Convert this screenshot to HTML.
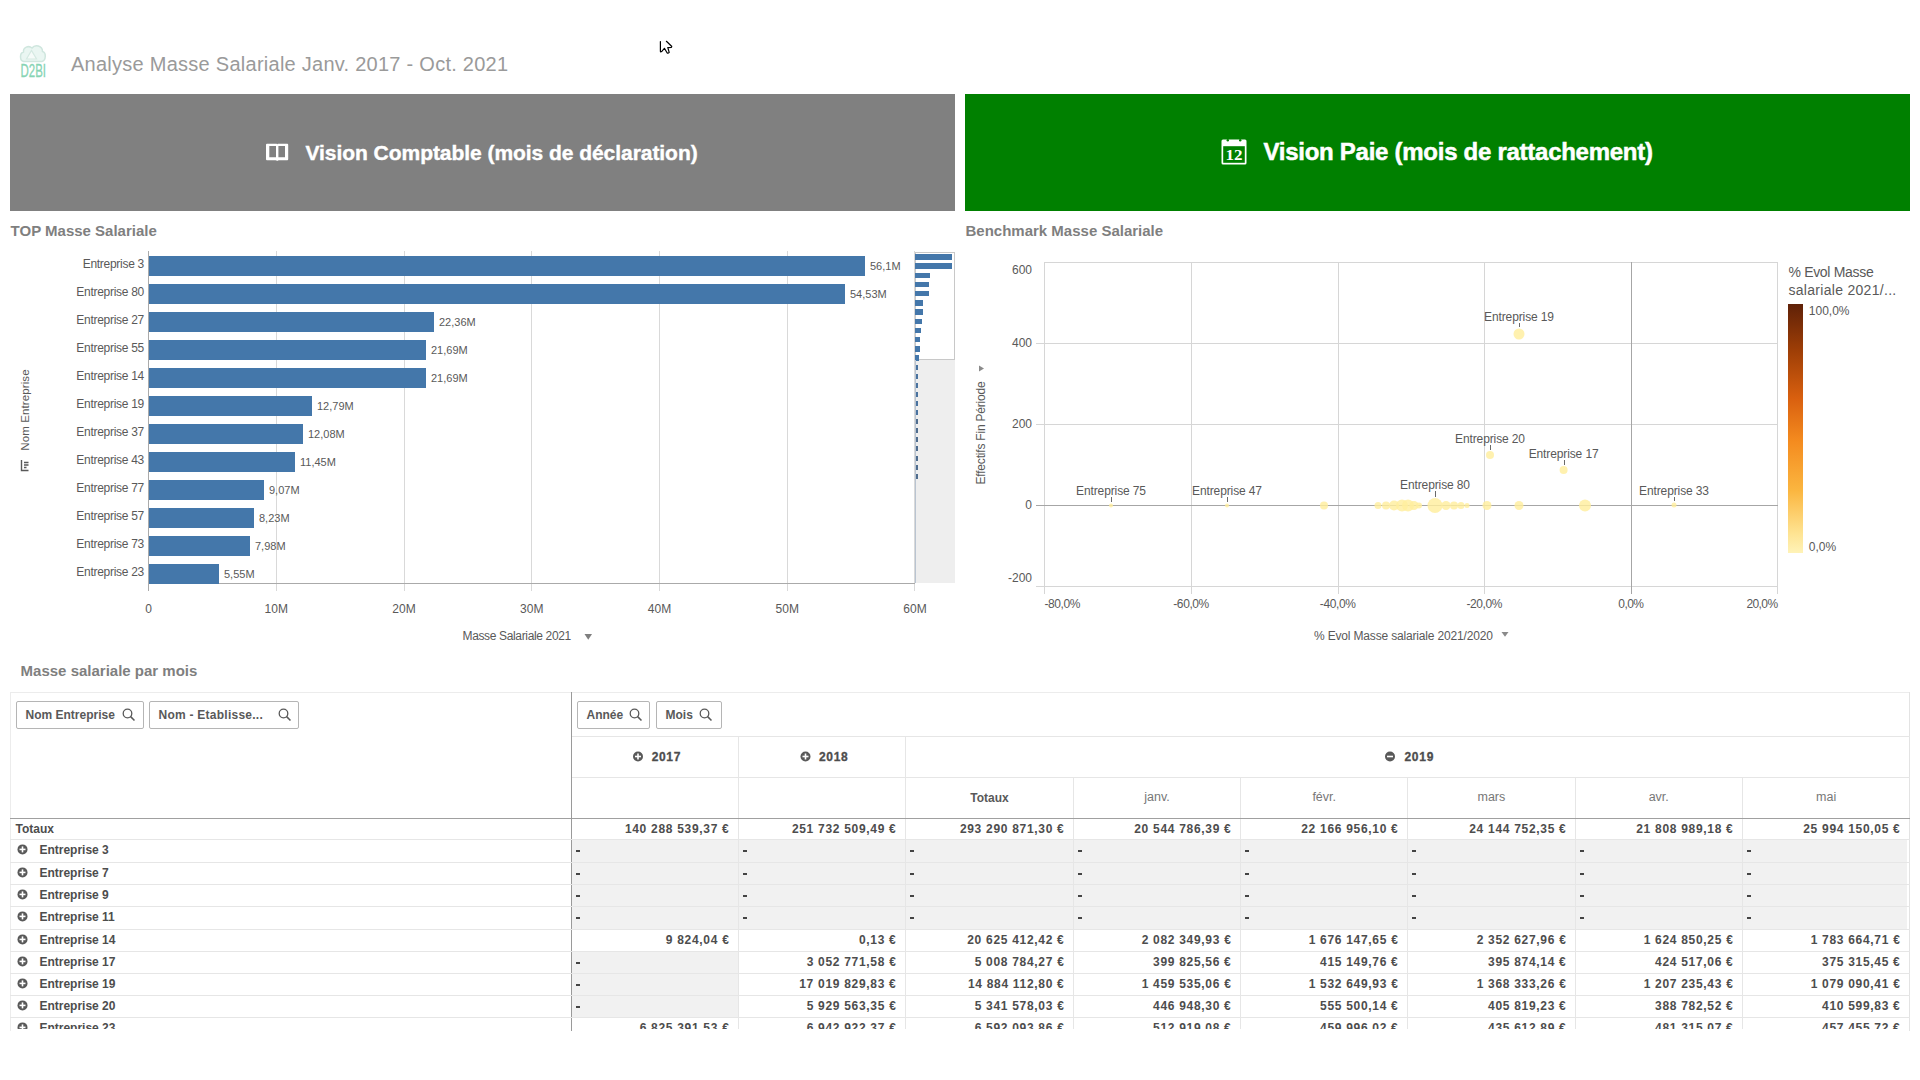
<!DOCTYPE html>
<html><head><meta charset="utf-8"><title>Analyse Masse Salariale</title>
<style>
html,body{margin:0;padding:0;background:#fff;}
body{width:1920px;height:1080px;overflow:hidden;position:relative;font-family:"Liberation Sans", sans-serif;}
.t{position:absolute;white-space:nowrap;}
.r{position:absolute;}
svg{position:absolute;overflow:visible;}
</style></head><body>

<svg style="left:0;top:0" width="60" height="90" viewBox="0 0 60 90">
<path d="M23.5 61.5 C19.5 60.5 19.5 53 23.5 52 C23 47.5 28.5 45 32 48 C35 44 42.5 45.5 42.5 51.5 C46.5 52.5 46 60.5 42 61.5 Z" fill="#eaf6f2" stroke="#cfe6de" stroke-width="1.5"/>
<path d="M26.5 59 L31.5 50.5 L36.5 59 Z" fill="#f6fbf9" stroke="#d5e9e2" stroke-width="1.2"/>
<text x="20.5" y="77" font-family="Liberation Sans" font-size="17.5" fill="#86d4b4" textLength="25.5" lengthAdjust="spacingAndGlyphs" stroke="#86d4b4" stroke-width="0.3">D2BI</text>
</svg>
<div class="t" style="left:71px;top:53.67px;font-size:20px;line-height:20px;font-weight:400;color:#9a9a9a;font-family:'Liberation Sans', sans-serif;letter-spacing:0.26px;">Analyse Masse Salariale Janv. 2017 - Oct. 2021</div>
<svg style="left:0;top:0" width="700" height="60" viewBox="0 0 700 60">
<path d="M660.4 41.5 L660.4 51.3 Q660.6 52.2 661.6 51.6 L664.4 48.3 L667.2 53.0 Q668.2 53.6 669.2 52.4 L667.8 47.6 L671.4 47.3 Q672.0 46.8 671.6 46.2 L666.4 41.3" fill="none" stroke="#000" stroke-width="1.2" stroke-linejoin="round" stroke-linecap="round"/>
</svg>
<div class="r" style="left:10px;top:94px;width:945px;height:117px;background:#808080;"></div>
<div class="r" style="left:965px;top:94px;width:945px;height:117px;background:#008000;"></div>
<svg style="left:0;top:0" width="400" height="200" viewBox="0 0 400 200">
<path fill="#fff" fill-rule="evenodd" d="M267 143.8 H276.5 Q277.2 143.8 277.2 144.6 Q277.2 143.8 278 143.8 H287.3 Q288.2 143.8 288.2 144.8 V159.3 Q288.2 160.2 287.3 160.2 H279 Q277.8 160.2 277.2 160.9 Q276.6 160.2 275.4 160.2 H267 Q266 160.2 266 159.3 V144.8 Q266 143.8 267 143.8 Z M269.3 145.9 V157.2 H276 V145.9 Z M278.4 145.9 V157.2 H285 V145.9 Z"/>
</svg>
<div class="t" style="left:305.5px;top:142.12px;font-size:21px;line-height:21px;font-weight:700;color:#fff;font-family:'Liberation Sans', sans-serif;letter-spacing:-0.05px;-webkit-text-stroke:0.4px #fff;">Vision Comptable (mois de déclaration)</div>
<svg style="left:1220px;top:138px" width="30" height="28" viewBox="0 0 30 28">
<path d="M3 1.5 H25 Q26.5 1.5 26.5 3 V25 Q26.5 26.5 25 26.5 H3 Q1.5 26.5 1.5 25 V3 Q1.5 1.5 3 1.5 Z" fill="#fff"/>
<rect x="3.2" y="8.2" width="21.6" height="16.6" fill="#008000"/>
<circle cx="7.8" cy="2.2" r="1.2" fill="#008000"/>
<circle cx="20.2" cy="2.2" r="1.2" fill="#008000"/>
<text x="14" y="21.8" font-family="Liberation Serif" font-size="14" font-weight="bold" fill="#fff" text-anchor="middle" textLength="17" lengthAdjust="spacingAndGlyphs">12</text>
</svg>
<div class="t" style="left:1263.5px;top:140.48px;font-size:24px;line-height:24px;font-weight:700;color:#fff;font-family:'Liberation Sans', sans-serif;letter-spacing:-0.27px;-webkit-text-stroke:0.5px #fff;">Vision Paie (mois de rattachement)</div>
<div class="t" style="left:10.6px;top:222.90px;font-size:15px;line-height:15px;font-weight:700;color:#7f7f7f;font-family:'Liberation Sans', sans-serif;">TOP Masse Salariale</div>
<div class="t" style="left:965.5px;top:222.90px;font-size:15px;line-height:15px;font-weight:700;color:#7f7f7f;font-family:'Liberation Sans', sans-serif;">Benchmark Masse Salariale</div>
<div class="t" style="left:20.6px;top:662.90px;font-size:15px;line-height:15px;font-weight:700;color:#7f7f7f;font-family:'Liberation Sans', sans-serif;">Masse salariale par mois</div>
<div class="r" style="left:276px;top:251px;width:1px;height:340px;background:#d9d9d9;"></div>
<div class="r" style="left:404px;top:251px;width:1px;height:340px;background:#d9d9d9;"></div>
<div class="r" style="left:531px;top:251px;width:1px;height:340px;background:#d9d9d9;"></div>
<div class="r" style="left:659px;top:251px;width:1px;height:340px;background:#d9d9d9;"></div>
<div class="r" style="left:787px;top:251px;width:1px;height:340px;background:#d9d9d9;"></div>
<div class="r" style="left:914px;top:251px;width:1px;height:340px;background:#d9d9d9;"></div>
<div class="r" style="left:148px;top:251px;width:1px;height:340px;background:#aaaaaa;"></div>
<div class="r" style="left:148px;top:583px;width:767px;height:1px;background:#aaaaaa;"></div>
<div class="r" style="left:149px;top:256px;width:716px;height:20px;background:#4477aa;"></div>
<div class="t" style="right:1776px;top:258.14px;font-size:12px;line-height:12px;font-weight:400;color:#595959;font-family:'Liberation Sans', sans-serif;letter-spacing:-0.28px;">Entreprise 3</div>
<div class="t" style="left:870px;top:261.49px;font-size:11px;line-height:11px;font-weight:400;color:#595959;font-family:'Liberation Sans', sans-serif;">56,1M</div>
<div class="r" style="left:149px;top:284px;width:696px;height:20px;background:#4477aa;"></div>
<div class="t" style="right:1776px;top:286.14px;font-size:12px;line-height:12px;font-weight:400;color:#595959;font-family:'Liberation Sans', sans-serif;letter-spacing:-0.28px;">Entreprise 80</div>
<div class="t" style="left:850px;top:289.49px;font-size:11px;line-height:11px;font-weight:400;color:#595959;font-family:'Liberation Sans', sans-serif;">54,53M</div>
<div class="r" style="left:149px;top:312px;width:285px;height:20px;background:#4477aa;"></div>
<div class="t" style="right:1776px;top:314.14px;font-size:12px;line-height:12px;font-weight:400;color:#595959;font-family:'Liberation Sans', sans-serif;letter-spacing:-0.28px;">Entreprise 27</div>
<div class="t" style="left:439px;top:317.49px;font-size:11px;line-height:11px;font-weight:400;color:#595959;font-family:'Liberation Sans', sans-serif;">22,36M</div>
<div class="r" style="left:149px;top:340px;width:277px;height:20px;background:#4477aa;"></div>
<div class="t" style="right:1776px;top:342.14px;font-size:12px;line-height:12px;font-weight:400;color:#595959;font-family:'Liberation Sans', sans-serif;letter-spacing:-0.28px;">Entreprise 55</div>
<div class="t" style="left:431px;top:345.49px;font-size:11px;line-height:11px;font-weight:400;color:#595959;font-family:'Liberation Sans', sans-serif;">21,69M</div>
<div class="r" style="left:149px;top:368px;width:277px;height:20px;background:#4477aa;"></div>
<div class="t" style="right:1776px;top:370.14px;font-size:12px;line-height:12px;font-weight:400;color:#595959;font-family:'Liberation Sans', sans-serif;letter-spacing:-0.28px;">Entreprise 14</div>
<div class="t" style="left:431px;top:373.49px;font-size:11px;line-height:11px;font-weight:400;color:#595959;font-family:'Liberation Sans', sans-serif;">21,69M</div>
<div class="r" style="left:149px;top:396px;width:163px;height:20px;background:#4477aa;"></div>
<div class="t" style="right:1776px;top:398.14px;font-size:12px;line-height:12px;font-weight:400;color:#595959;font-family:'Liberation Sans', sans-serif;letter-spacing:-0.28px;">Entreprise 19</div>
<div class="t" style="left:317px;top:401.49px;font-size:11px;line-height:11px;font-weight:400;color:#595959;font-family:'Liberation Sans', sans-serif;">12,79M</div>
<div class="r" style="left:149px;top:424px;width:154px;height:20px;background:#4477aa;"></div>
<div class="t" style="right:1776px;top:426.14px;font-size:12px;line-height:12px;font-weight:400;color:#595959;font-family:'Liberation Sans', sans-serif;letter-spacing:-0.28px;">Entreprise 37</div>
<div class="t" style="left:308px;top:429.49px;font-size:11px;line-height:11px;font-weight:400;color:#595959;font-family:'Liberation Sans', sans-serif;">12,08M</div>
<div class="r" style="left:149px;top:452px;width:146px;height:20px;background:#4477aa;"></div>
<div class="t" style="right:1776px;top:454.14px;font-size:12px;line-height:12px;font-weight:400;color:#595959;font-family:'Liberation Sans', sans-serif;letter-spacing:-0.28px;">Entreprise 43</div>
<div class="t" style="left:300px;top:457.49px;font-size:11px;line-height:11px;font-weight:400;color:#595959;font-family:'Liberation Sans', sans-serif;">11,45M</div>
<div class="r" style="left:149px;top:480px;width:115px;height:20px;background:#4477aa;"></div>
<div class="t" style="right:1776px;top:482.14px;font-size:12px;line-height:12px;font-weight:400;color:#595959;font-family:'Liberation Sans', sans-serif;letter-spacing:-0.28px;">Entreprise 77</div>
<div class="t" style="left:269px;top:485.49px;font-size:11px;line-height:11px;font-weight:400;color:#595959;font-family:'Liberation Sans', sans-serif;">9,07M</div>
<div class="r" style="left:149px;top:508px;width:105px;height:20px;background:#4477aa;"></div>
<div class="t" style="right:1776px;top:510.14px;font-size:12px;line-height:12px;font-weight:400;color:#595959;font-family:'Liberation Sans', sans-serif;letter-spacing:-0.28px;">Entreprise 57</div>
<div class="t" style="left:259px;top:513.49px;font-size:11px;line-height:11px;font-weight:400;color:#595959;font-family:'Liberation Sans', sans-serif;">8,23M</div>
<div class="r" style="left:149px;top:536px;width:101px;height:20px;background:#4477aa;"></div>
<div class="t" style="right:1776px;top:538.14px;font-size:12px;line-height:12px;font-weight:400;color:#595959;font-family:'Liberation Sans', sans-serif;letter-spacing:-0.28px;">Entreprise 73</div>
<div class="t" style="left:255px;top:541.49px;font-size:11px;line-height:11px;font-weight:400;color:#595959;font-family:'Liberation Sans', sans-serif;">7,98M</div>
<div class="r" style="left:149px;top:564px;width:70px;height:20px;background:#4477aa;"></div>
<div class="t" style="right:1776px;top:566.14px;font-size:12px;line-height:12px;font-weight:400;color:#595959;font-family:'Liberation Sans', sans-serif;letter-spacing:-0.28px;">Entreprise 23</div>
<div class="t" style="left:224px;top:569.49px;font-size:11px;line-height:11px;font-weight:400;color:#595959;font-family:'Liberation Sans', sans-serif;">5,55M</div>
<div class="t" style="left:148.5px;top:602.84px;font-size:12px;line-height:12px;font-weight:400;color:#595959;font-family:'Liberation Sans', sans-serif;transform:translateX(-50%);">0</div>
<div class="t" style="left:276.25px;top:602.84px;font-size:12px;line-height:12px;font-weight:400;color:#595959;font-family:'Liberation Sans', sans-serif;transform:translateX(-50%);">10M</div>
<div class="t" style="left:404.0px;top:602.84px;font-size:12px;line-height:12px;font-weight:400;color:#595959;font-family:'Liberation Sans', sans-serif;transform:translateX(-50%);">20M</div>
<div class="t" style="left:531.75px;top:602.84px;font-size:12px;line-height:12px;font-weight:400;color:#595959;font-family:'Liberation Sans', sans-serif;transform:translateX(-50%);">30M</div>
<div class="t" style="left:659.5px;top:602.84px;font-size:12px;line-height:12px;font-weight:400;color:#595959;font-family:'Liberation Sans', sans-serif;transform:translateX(-50%);">40M</div>
<div class="t" style="left:787.25px;top:602.84px;font-size:12px;line-height:12px;font-weight:400;color:#595959;font-family:'Liberation Sans', sans-serif;transform:translateX(-50%);">50M</div>
<div class="t" style="left:915.0px;top:602.84px;font-size:12px;line-height:12px;font-weight:400;color:#595959;font-family:'Liberation Sans', sans-serif;transform:translateX(-50%);">60M</div>
<div class="t" style="left:462.5px;top:630.44px;font-size:12px;line-height:12px;font-weight:400;color:#595959;font-family:'Liberation Sans', sans-serif;letter-spacing:-0.35px;">Masse Salariale 2021</div>
<svg style="left:584px;top:633px" width="9" height="8" viewBox="0 0 9 8"><path d="M0.5 1 L8 1 L4.25 6.8 Z" fill="#7f7f7f"/></svg>
<div class="t" style="left:24.8px;top:409.5px;font-size:11.5px;line-height:12px;color:#595959;transform:translate(-50%,-50%) rotate(-90deg);letter-spacing:0.1px">Nom Entreprise</div>
<svg style="left:20px;top:459px" width="10" height="13" viewBox="0 0 10 13">
<g fill="none" stroke="#595959" stroke-width="1.4"><path d="M1.5 1 V11.5 H8.5"/><path d="M4 3.5 H8.5 M4 6 H8.5 M4 8.5 H6.5"/></g></svg>
<div class="r" style="left:915px;top:252px;width:40px;height:331px;background:#eeeeee;"></div>
<div class="r" style="left:915px;top:252px;width:40px;height:108px;background:#ffffff;box-sizing:border-box;border:1px solid #c8c8c8;"></div>
<div class="r" style="left:915px;top:254.0px;width:37px;height:5.5px;background:#4477aa;"></div>
<div class="r" style="left:915px;top:263.0px;width:37px;height:5.5px;background:#4477aa;"></div>
<div class="r" style="left:915px;top:272.5px;width:14.5px;height:5.5px;background:#4477aa;"></div>
<div class="r" style="left:915px;top:281.5px;width:14px;height:5.5px;background:#4477aa;"></div>
<div class="r" style="left:915px;top:290.5px;width:14px;height:5.5px;background:#4477aa;"></div>
<div class="r" style="left:915px;top:300.0px;width:8px;height:5.5px;background:#4477aa;"></div>
<div class="r" style="left:915px;top:309.0px;width:7.5px;height:5.5px;background:#4477aa;"></div>
<div class="r" style="left:915px;top:318.5px;width:7px;height:5.5px;background:#4477aa;"></div>
<div class="r" style="left:915px;top:327.5px;width:5.8px;height:5.5px;background:#4477aa;"></div>
<div class="r" style="left:915px;top:336.5px;width:5px;height:5.5px;background:#4477aa;"></div>
<div class="r" style="left:915px;top:346.0px;width:5px;height:5.5px;background:#4477aa;"></div>
<div class="r" style="left:915px;top:355.0px;width:3.5px;height:5.5px;background:#4477aa;"></div>
<div class="r" style="left:915px;top:365px;width:3px;height:5px;background:#4a73a0;"></div>
<div class="r" style="left:915px;top:374px;width:3px;height:5px;background:#4a73a0;"></div>
<div class="r" style="left:915px;top:383px;width:3px;height:5px;background:#4a73a0;"></div>
<div class="r" style="left:915px;top:392px;width:3px;height:5px;background:#4a73a0;"></div>
<div class="r" style="left:915px;top:401px;width:3px;height:5px;background:#4a73a0;"></div>
<div class="r" style="left:915px;top:410px;width:3px;height:5px;background:#4a73a0;"></div>
<div class="r" style="left:915px;top:419px;width:2.5px;height:5px;background:#4f6d8f;"></div>
<div class="r" style="left:915px;top:428px;width:2.5px;height:5px;background:#4f6d8f;"></div>
<div class="r" style="left:915px;top:437px;width:2.5px;height:5px;background:#4f6d8f;"></div>
<div class="r" style="left:915px;top:446px;width:2.5px;height:5px;background:#4f6d8f;"></div>
<div class="r" style="left:915px;top:456px;width:2.5px;height:5px;background:#4f6d8f;"></div>
<div class="r" style="left:915px;top:465px;width:2.5px;height:5px;background:#4f6d8f;"></div>
<div class="r" style="left:915px;top:474px;width:2.5px;height:5px;background:#4f6d8f;"></div>
<div class="r" style="left:915px;top:360px;width:1px;height:223px;background:#b9c4d1;"></div>
<div class="r" style="left:1191px;top:262px;width:1px;height:332px;background:#d6d6d6;"></div>
<div class="r" style="left:1338px;top:262px;width:1px;height:332px;background:#d6d6d6;"></div>
<div class="r" style="left:1484px;top:262px;width:1px;height:332px;background:#d6d6d6;"></div>
<div class="r" style="left:1777px;top:262px;width:1px;height:332px;background:#d6d6d6;"></div>
<div class="r" style="left:1044px;top:262px;width:1px;height:332px;background:#d6d6d6;"></div>
<div class="r" style="left:1036px;top:343px;width:742px;height:1px;background:#d6d6d6;"></div>
<div class="r" style="left:1036px;top:424px;width:742px;height:1px;background:#d6d6d6;"></div>
<div class="r" style="left:1044px;top:262px;width:734px;height:1px;background:#d6d6d6;"></div>
<div class="r" style="left:1036px;top:586px;width:742px;height:1px;background:#d6d6d6;"></div>
<div class="r" style="left:1631px;top:262px;width:1px;height:332px;background:#a6a6a6;"></div>
<div class="r" style="left:1036px;top:505px;width:742px;height:1px;background:#a6a6a6;"></div>
<div class="t" style="right:888px;top:263.84px;font-size:12px;line-height:12px;font-weight:400;color:#595959;font-family:'Liberation Sans', sans-serif;">600</div>
<div class="t" style="right:888px;top:337.34px;font-size:12px;line-height:12px;font-weight:400;color:#595959;font-family:'Liberation Sans', sans-serif;">400</div>
<div class="t" style="right:888px;top:418.34px;font-size:12px;line-height:12px;font-weight:400;color:#595959;font-family:'Liberation Sans', sans-serif;">200</div>
<div class="t" style="right:888px;top:499.34px;font-size:12px;line-height:12px;font-weight:400;color:#595959;font-family:'Liberation Sans', sans-serif;">0</div>
<div class="t" style="right:888px;top:571.84px;font-size:12px;line-height:12px;font-weight:400;color:#595959;font-family:'Liberation Sans', sans-serif;">-200</div>
<div class="t" style="left:1044.4px;top:597.64px;font-size:12px;line-height:12px;font-weight:400;color:#595959;font-family:'Liberation Sans', sans-serif;letter-spacing:-0.4px;">-80,0%</div>
<div class="t" style="left:1191.08px;top:597.64px;font-size:12px;line-height:12px;font-weight:400;color:#595959;font-family:'Liberation Sans', sans-serif;letter-spacing:-0.4px;transform:translateX(-50%);">-60,0%</div>
<div class="t" style="left:1337.66px;top:597.64px;font-size:12px;line-height:12px;font-weight:400;color:#595959;font-family:'Liberation Sans', sans-serif;letter-spacing:-0.4px;transform:translateX(-50%);">-40,0%</div>
<div class="t" style="left:1484.24px;top:597.64px;font-size:12px;line-height:12px;font-weight:400;color:#595959;font-family:'Liberation Sans', sans-serif;letter-spacing:-0.4px;transform:translateX(-50%);">-20,0%</div>
<div class="t" style="left:1630.8200000000002px;top:597.64px;font-size:12px;line-height:12px;font-weight:400;color:#595959;font-family:'Liberation Sans', sans-serif;letter-spacing:-0.6px;transform:translateX(-50%);">0,0%</div>
<div class="t" style="right:142.5px;top:597.64px;font-size:12px;line-height:12px;font-weight:400;color:#595959;font-family:'Liberation Sans', sans-serif;letter-spacing:-0.6px;">20,0%</div>
<div class="t" style="left:1314px;top:629.84px;font-size:12px;line-height:12px;font-weight:400;color:#595959;font-family:'Liberation Sans', sans-serif;letter-spacing:-0.17px;">% Evol Masse salariale 2021/2020</div>
<svg style="left:1501px;top:631px" width="9" height="8" viewBox="0 0 9 8"><path d="M0.5 1 L7.5 1 L4 5.8 Z" fill="#8a8a8a"/></svg>
<div class="t" style="left:980.5px;top:433px;font-size:12px;line-height:12px;color:#595959;transform:translate(-50%,-50%) rotate(-90deg);letter-spacing:-0.2px">Effectifs Fin Période</div>
<svg style="left:977px;top:364px" width="9" height="10" viewBox="0 0 9 10"><path d="M2 1.5 L7 4.5 L2 7.5 Z" fill="#8a8a8a"/></svg>
<svg style="left:0;top:0" width="1920" height="700" viewBox="0 0 1920 700"><circle cx="1111" cy="505.5" r="2" fill="rgba(255,238,158,0.82)"/><circle cx="1227" cy="505.5" r="2" fill="rgba(255,238,158,0.82)"/><circle cx="1324" cy="505.5" r="4" fill="rgba(255,238,158,0.82)"/><circle cx="1519" cy="334" r="5.5" fill="rgba(255,238,158,0.82)"/><circle cx="1490" cy="455" r="4" fill="rgba(255,238,158,0.82)"/><circle cx="1563.6" cy="470" r="4" fill="rgba(255,238,158,0.82)"/><circle cx="1435" cy="505.5" r="7.5" fill="rgba(255,238,158,0.82)"/><circle cx="1487" cy="505.5" r="4.5" fill="rgba(255,238,158,0.82)"/><circle cx="1519" cy="505.5" r="4.5" fill="rgba(255,238,158,0.82)"/><circle cx="1585" cy="505.5" r="6" fill="rgba(255,238,158,0.82)"/><circle cx="1674" cy="505" r="2.5" fill="rgba(255,238,158,0.82)"/><circle cx="1378" cy="505.5" r="3.5" fill="rgba(255,238,158,0.82)"/><circle cx="1386" cy="505.5" r="4" fill="rgba(255,238,158,0.82)"/><circle cx="1394" cy="505.5" r="5" fill="rgba(255,238,158,0.82)"/><circle cx="1402" cy="505.5" r="6" fill="rgba(255,238,158,0.82)"/><circle cx="1408" cy="505.5" r="6" fill="rgba(255,238,158,0.82)"/><circle cx="1414" cy="505.5" r="4.5" fill="rgba(255,238,158,0.82)"/><circle cx="1419" cy="505.5" r="3" fill="rgba(255,238,158,0.82)"/><circle cx="1446" cy="505.5" r="4.5" fill="rgba(255,238,158,0.82)"/><circle cx="1454" cy="505.5" r="4" fill="rgba(255,238,158,0.82)"/><circle cx="1461" cy="505.5" r="3.5" fill="rgba(255,238,158,0.82)"/><circle cx="1467" cy="505.5" r="2.5" fill="rgba(255,238,158,0.82)"/></svg>
<div class="t" style="left:1519px;top:311.24px;font-size:12px;line-height:12px;font-weight:400;color:#595959;font-family:'Liberation Sans', sans-serif;letter-spacing:-0.12px;transform:translateX(-50%);">Entreprise 19</div>
<div class="r" style="left:1519px;top:323.4px;width:1px;height:4.100000000000023px;background:#6a6a6a;"></div>
<div class="t" style="left:1490px;top:433.14px;font-size:12px;line-height:12px;font-weight:400;color:#595959;font-family:'Liberation Sans', sans-serif;letter-spacing:-0.12px;transform:translateX(-50%);">Entreprise 20</div>
<div class="r" style="left:1490px;top:445.3px;width:1px;height:4.699999999999989px;background:#6a6a6a;"></div>
<div class="t" style="left:1563.6px;top:448.04px;font-size:12px;line-height:12px;font-weight:400;color:#595959;font-family:'Liberation Sans', sans-serif;letter-spacing:-0.12px;transform:translateX(-50%);">Entreprise 17</div>
<div class="r" style="left:1564px;top:460.2px;width:1px;height:4.800000000000011px;background:#6a6a6a;"></div>
<div class="t" style="left:1435px;top:478.84px;font-size:12px;line-height:12px;font-weight:400;color:#595959;font-family:'Liberation Sans', sans-serif;letter-spacing:-0.12px;transform:translateX(-50%);">Entreprise 80</div>
<div class="r" style="left:1435px;top:491px;width:1px;height:6.0px;background:#6a6a6a;"></div>
<div class="t" style="left:1111px;top:484.84px;font-size:12px;line-height:12px;font-weight:400;color:#595959;font-family:'Liberation Sans', sans-serif;letter-spacing:-0.12px;transform:translateX(-50%);">Entreprise 75</div>
<div class="r" style="left:1111px;top:497px;width:1px;height:5px;background:#6a6a6a;"></div>
<div class="t" style="left:1227px;top:484.84px;font-size:12px;line-height:12px;font-weight:400;color:#595959;font-family:'Liberation Sans', sans-serif;letter-spacing:-0.12px;transform:translateX(-50%);">Entreprise 47</div>
<div class="r" style="left:1227px;top:497px;width:1px;height:5px;background:#6a6a6a;"></div>
<div class="t" style="left:1674px;top:485.04px;font-size:12px;line-height:12px;font-weight:400;color:#595959;font-family:'Liberation Sans', sans-serif;letter-spacing:-0.12px;transform:translateX(-50%);">Entreprise 33</div>
<div class="r" style="left:1674px;top:497.2px;width:1px;height:3.8000000000000114px;background:#6a6a6a;"></div>
<div class="t" style="left:1788.4px;top:265.05px;font-size:14px;line-height:14px;font-weight:400;color:#595959;font-family:'Liberation Sans', sans-serif;letter-spacing:-0.3px;">% Evol Masse</div>
<div class="t" style="left:1788.4px;top:282.90px;font-size:14px;line-height:14px;font-weight:400;color:#595959;font-family:'Liberation Sans', sans-serif;letter-spacing:0.3px;">salariale 2021/...</div>
<div class="r" style="left:1788px;top:304px;width:15px;height:249px;background:linear-gradient(to bottom,#5f2108 0%,#9c3d06 18%,#d9600f 38%,#f48b1f 55%,#fbb640 75%,#fee391 92%,#fff3b8 100%);"></div>
<div class="t" style="left:1808.8px;top:304.64px;font-size:12px;line-height:12px;font-weight:400;color:#595959;font-family:'Liberation Sans', sans-serif;">100,0%</div>
<div class="t" style="left:1808.8px;top:541.34px;font-size:12px;line-height:12px;font-weight:400;color:#595959;font-family:'Liberation Sans', sans-serif;">0,0%</div>
<div class="r" style="left:10px;top:692px;width:1900px;height:1px;background:#ececec;"></div>
<div class="r" style="left:10px;top:692px;width:1px;height:339px;background:#ececec;"></div>
<div class="r" style="left:1909px;top:692px;width:1px;height:339px;background:#e3e3e3;"></div>
<div class="r" style="left:16px;top:701px;width:128px;height:28px;background:#fff;box-sizing:border-box;border:1px solid #b5b5b5;border-radius:2px;"></div>
<div class="t" style="left:25.5px;top:708.59px;font-size:12px;line-height:12px;font-weight:700;color:#595959;font-family:'Liberation Sans', sans-serif;">Nom Entreprise</div>
<svg style="left:122px;top:708px" width="14" height="14" viewBox="0 0 14 14"><circle cx="5.5" cy="5.5" r="4.3" fill="none" stroke="#595959" stroke-width="1.3"/><path d="M8.6 8.6 L12.5 12.5" stroke="#595959" stroke-width="1.5"/></svg>
<div class="r" style="left:149px;top:701px;width:150px;height:28px;background:#fff;box-sizing:border-box;border:1px solid #b5b5b5;border-radius:2px;"></div>
<div class="t" style="left:158.5px;top:708.59px;font-size:12px;line-height:12px;font-weight:700;color:#595959;font-family:'Liberation Sans', sans-serif;letter-spacing:0.25px;">Nom - Etablisse...</div>
<svg style="left:278px;top:708px" width="14" height="14" viewBox="0 0 14 14"><circle cx="5.5" cy="5.5" r="4.3" fill="none" stroke="#595959" stroke-width="1.3"/><path d="M8.6 8.6 L12.5 12.5" stroke="#595959" stroke-width="1.5"/></svg>
<div class="r" style="left:577px;top:701px;width:73px;height:28px;background:#fff;box-sizing:border-box;border:1px solid #b5b5b5;border-radius:2px;"></div>
<div class="t" style="left:586.5px;top:708.59px;font-size:12px;line-height:12px;font-weight:700;color:#595959;font-family:'Liberation Sans', sans-serif;">Année</div>
<svg style="left:629px;top:708px" width="14" height="14" viewBox="0 0 14 14"><circle cx="5.5" cy="5.5" r="4.3" fill="none" stroke="#595959" stroke-width="1.3"/><path d="M8.6 8.6 L12.5 12.5" stroke="#595959" stroke-width="1.5"/></svg>
<div class="r" style="left:656px;top:701px;width:66px;height:28px;background:#fff;box-sizing:border-box;border:1px solid #b5b5b5;border-radius:2px;"></div>
<div class="t" style="left:665.5px;top:708.59px;font-size:12px;line-height:12px;font-weight:700;color:#595959;font-family:'Liberation Sans', sans-serif;">Mois</div>
<svg style="left:699px;top:708px" width="14" height="14" viewBox="0 0 14 14"><circle cx="5.5" cy="5.5" r="4.3" fill="none" stroke="#595959" stroke-width="1.3"/><path d="M8.6 8.6 L12.5 12.5" stroke="#595959" stroke-width="1.5"/></svg>
<div class="r" style="left:572px;top:736px;width:1338px;height:1px;background:#e6e6e6;"></div>
<div class="r" style="left:572px;top:777px;width:1338px;height:1px;background:#e6e6e6;"></div>
<div class="r" style="left:738px;top:736px;width:1px;height:82px;background:#e6e6e6;"></div>
<div class="r" style="left:905px;top:736px;width:1px;height:82px;background:#e6e6e6;"></div>
<div class="r" style="left:1073px;top:777px;width:1px;height:41px;background:#e6e6e6;"></div>
<div class="r" style="left:1240px;top:777px;width:1px;height:41px;background:#e6e6e6;"></div>
<div class="r" style="left:1407px;top:777px;width:1px;height:41px;background:#e6e6e6;"></div>
<div class="r" style="left:1575px;top:777px;width:1px;height:41px;background:#e6e6e6;"></div>
<div class="r" style="left:1742px;top:777px;width:1px;height:41px;background:#e6e6e6;"></div>
<div class="r" style="left:10px;top:818px;width:1900px;height:1px;background:#a0a0a0;"></div>
<div class="r" style="left:571px;top:692px;width:1px;height:339px;background:#9a9a9a;"></div>
<svg style="left:0;top:0" width="1920" height="1080" viewBox="0 0 1920 1080"><circle cx="638" cy="756.5" r="5" fill="#595959"/><path d="M635 756.5 H641" stroke="#fff" stroke-width="1.6"/><path d="M638 753.5 V759.5" stroke="#fff" stroke-width="1.6"/></svg>
<div class="t" style="left:651.7px;top:750.64px;font-size:12px;line-height:12px;font-weight:700;color:#4d4d4d;font-family:'Liberation Sans', sans-serif;letter-spacing:0.65px;-webkit-text-stroke:0.3px #4d4d4d;">2017</div>
<svg style="left:0;top:0" width="1920" height="1080" viewBox="0 0 1920 1080"><circle cx="805.5" cy="756.5" r="5" fill="#595959"/><path d="M802.5 756.5 H808.5" stroke="#fff" stroke-width="1.6"/><path d="M805.5 753.5 V759.5" stroke="#fff" stroke-width="1.6"/></svg>
<div class="t" style="left:819px;top:750.64px;font-size:12px;line-height:12px;font-weight:700;color:#4d4d4d;font-family:'Liberation Sans', sans-serif;letter-spacing:0.65px;-webkit-text-stroke:0.3px #4d4d4d;">2018</div>
<svg style="left:0;top:0" width="1920" height="1080" viewBox="0 0 1920 1080"><circle cx="1390" cy="756.5" r="5" fill="#595959"/><path d="M1387 756.5 H1393" stroke="#fff" stroke-width="1.6"/></svg>
<div class="t" style="left:1404.4px;top:750.64px;font-size:12px;line-height:12px;font-weight:700;color:#4d4d4d;font-family:'Liberation Sans', sans-serif;letter-spacing:0.75px;-webkit-text-stroke:0.3px #4d4d4d;">2019</div>
<div class="t" style="left:989.55px;top:791.84px;font-size:12px;line-height:12px;font-weight:700;color:#595959;font-family:'Liberation Sans', sans-serif;transform:translateX(-50%);">Totaux</div>
<div class="t" style="left:1157.05px;top:791.42px;font-size:12.5px;line-height:12.5px;font-weight:400;color:#777777;font-family:'Liberation Sans', sans-serif;transform:translateX(-50%);">janv.</div>
<div class="t" style="left:1324.1999999999998px;top:791.42px;font-size:12.5px;line-height:12.5px;font-weight:400;color:#777777;font-family:'Liberation Sans', sans-serif;transform:translateX(-50%);">févr.</div>
<div class="t" style="left:1491.4px;top:791.42px;font-size:12.5px;line-height:12.5px;font-weight:400;color:#777777;font-family:'Liberation Sans', sans-serif;transform:translateX(-50%);">mars</div>
<div class="t" style="left:1658.75px;top:791.42px;font-size:12.5px;line-height:12.5px;font-weight:400;color:#777777;font-family:'Liberation Sans', sans-serif;transform:translateX(-50%);">avr.</div>
<div class="t" style="left:1826.1px;top:791.42px;font-size:12.5px;line-height:12.5px;font-weight:400;color:#777777;font-family:'Liberation Sans', sans-serif;transform:translateX(-50%);">mai</div>
<div class="t" style="left:15.5px;top:822.64px;font-size:12px;line-height:12px;font-weight:700;color:#4d4d4d;font-family:'Liberation Sans', sans-serif;">Totaux</div>
<div class="t" style="right:1190.5px;top:822.64px;font-size:12px;line-height:12px;font-weight:700;color:#4d4d4d;font-family:'Liberation Sans', sans-serif;letter-spacing:0.7px;">140 288 539,37 €</div>
<div class="t" style="right:1023.5px;top:822.64px;font-size:12px;line-height:12px;font-weight:700;color:#4d4d4d;font-family:'Liberation Sans', sans-serif;letter-spacing:0.7px;">251 732 509,49 €</div>
<div class="t" style="right:855.5px;top:822.64px;font-size:12px;line-height:12px;font-weight:700;color:#4d4d4d;font-family:'Liberation Sans', sans-serif;letter-spacing:0.7px;">293 290 871,30 €</div>
<div class="t" style="right:688.5px;top:822.64px;font-size:12px;line-height:12px;font-weight:700;color:#4d4d4d;font-family:'Liberation Sans', sans-serif;letter-spacing:0.7px;">20 544 786,39 €</div>
<div class="t" style="right:521.5px;top:822.64px;font-size:12px;line-height:12px;font-weight:700;color:#4d4d4d;font-family:'Liberation Sans', sans-serif;letter-spacing:0.7px;">22 166 956,10 €</div>
<div class="t" style="right:353.5px;top:822.64px;font-size:12px;line-height:12px;font-weight:700;color:#4d4d4d;font-family:'Liberation Sans', sans-serif;letter-spacing:0.7px;">24 144 752,35 €</div>
<div class="t" style="right:186.5px;top:822.64px;font-size:12px;line-height:12px;font-weight:700;color:#4d4d4d;font-family:'Liberation Sans', sans-serif;letter-spacing:0.7px;">21 808 989,18 €</div>
<div class="t" style="right:19.5px;top:822.64px;font-size:12px;line-height:12px;font-weight:700;color:#4d4d4d;font-family:'Liberation Sans', sans-serif;letter-spacing:0.7px;">25 994 150,05 €</div>
<div style="position:absolute;left:0;top:0;width:1920px;height:1029px;overflow:hidden">
<div class="r" style="left:572px;top:840px;width:166px;height:22px;background:#f1f1f1;"></div>
<div class="r" style="left:739px;top:840px;width:166px;height:22px;background:#f1f1f1;"></div>
<div class="r" style="left:906px;top:840px;width:167px;height:22px;background:#f1f1f1;"></div>
<div class="r" style="left:1074px;top:840px;width:166px;height:22px;background:#f1f1f1;"></div>
<div class="r" style="left:1241px;top:840px;width:166px;height:22px;background:#f1f1f1;"></div>
<div class="r" style="left:1408px;top:840px;width:167px;height:22px;background:#f1f1f1;"></div>
<div class="r" style="left:1576px;top:840px;width:166px;height:22px;background:#f1f1f1;"></div>
<div class="r" style="left:1743px;top:840px;width:164px;height:22px;background:#f1f1f1;"></div>
<div class="r" style="left:10px;top:839px;width:1900px;height:1px;background:#e6e6e6;"></div>
<svg style="left:0;top:0" width="1920" height="1080" viewBox="0 0 1920 1080"><circle cx="22.5" cy="849.4" r="5" fill="#595959"/><path d="M19.5 849.4 H25.5" stroke="#fff" stroke-width="1.6"/><path d="M22.5 846.4 V852.4" stroke="#fff" stroke-width="1.6"/></svg>
<div class="t" style="left:39.4px;top:843.74px;font-size:12px;line-height:12px;font-weight:700;color:#4d4d4d;font-family:'Liberation Sans', sans-serif;">Entreprise 3</div>
<div class="r" style="left:575.5px;top:849.5px;width:4.2px;height:2px;background:#444;"></div>
<div class="r" style="left:742.5px;top:849.5px;width:4.2px;height:2px;background:#444;"></div>
<div class="r" style="left:909.5px;top:849.5px;width:4.2px;height:2px;background:#444;"></div>
<div class="r" style="left:1077.5px;top:849.5px;width:4.2px;height:2px;background:#444;"></div>
<div class="r" style="left:1244.5px;top:849.5px;width:4.2px;height:2px;background:#444;"></div>
<div class="r" style="left:1411.5px;top:849.5px;width:4.2px;height:2px;background:#444;"></div>
<div class="r" style="left:1579.5px;top:849.5px;width:4.2px;height:2px;background:#444;"></div>
<div class="r" style="left:1746.5px;top:849.5px;width:4.2px;height:2px;background:#444;"></div>
<div class="r" style="left:572px;top:863px;width:166px;height:21px;background:#f1f1f1;"></div>
<div class="r" style="left:739px;top:863px;width:166px;height:21px;background:#f1f1f1;"></div>
<div class="r" style="left:906px;top:863px;width:167px;height:21px;background:#f1f1f1;"></div>
<div class="r" style="left:1074px;top:863px;width:166px;height:21px;background:#f1f1f1;"></div>
<div class="r" style="left:1241px;top:863px;width:166px;height:21px;background:#f1f1f1;"></div>
<div class="r" style="left:1408px;top:863px;width:167px;height:21px;background:#f1f1f1;"></div>
<div class="r" style="left:1576px;top:863px;width:166px;height:21px;background:#f1f1f1;"></div>
<div class="r" style="left:1743px;top:863px;width:164px;height:21px;background:#f1f1f1;"></div>
<div class="r" style="left:10px;top:862px;width:1900px;height:1px;background:#e6e6e6;"></div>
<svg style="left:0;top:0" width="1920" height="1080" viewBox="0 0 1920 1080"><circle cx="22.5" cy="872.4" r="5" fill="#595959"/><path d="M19.5 872.4 H25.5" stroke="#fff" stroke-width="1.6"/><path d="M22.5 869.4 V875.4" stroke="#fff" stroke-width="1.6"/></svg>
<div class="t" style="left:39.4px;top:866.74px;font-size:12px;line-height:12px;font-weight:700;color:#4d4d4d;font-family:'Liberation Sans', sans-serif;">Entreprise 7</div>
<div class="r" style="left:575.5px;top:872.5px;width:4.2px;height:2px;background:#444;"></div>
<div class="r" style="left:742.5px;top:872.5px;width:4.2px;height:2px;background:#444;"></div>
<div class="r" style="left:909.5px;top:872.5px;width:4.2px;height:2px;background:#444;"></div>
<div class="r" style="left:1077.5px;top:872.5px;width:4.2px;height:2px;background:#444;"></div>
<div class="r" style="left:1244.5px;top:872.5px;width:4.2px;height:2px;background:#444;"></div>
<div class="r" style="left:1411.5px;top:872.5px;width:4.2px;height:2px;background:#444;"></div>
<div class="r" style="left:1579.5px;top:872.5px;width:4.2px;height:2px;background:#444;"></div>
<div class="r" style="left:1746.5px;top:872.5px;width:4.2px;height:2px;background:#444;"></div>
<div class="r" style="left:572px;top:885px;width:166px;height:21px;background:#f1f1f1;"></div>
<div class="r" style="left:739px;top:885px;width:166px;height:21px;background:#f1f1f1;"></div>
<div class="r" style="left:906px;top:885px;width:167px;height:21px;background:#f1f1f1;"></div>
<div class="r" style="left:1074px;top:885px;width:166px;height:21px;background:#f1f1f1;"></div>
<div class="r" style="left:1241px;top:885px;width:166px;height:21px;background:#f1f1f1;"></div>
<div class="r" style="left:1408px;top:885px;width:167px;height:21px;background:#f1f1f1;"></div>
<div class="r" style="left:1576px;top:885px;width:166px;height:21px;background:#f1f1f1;"></div>
<div class="r" style="left:1743px;top:885px;width:164px;height:21px;background:#f1f1f1;"></div>
<div class="r" style="left:10px;top:884px;width:1900px;height:1px;background:#e6e6e6;"></div>
<svg style="left:0;top:0" width="1920" height="1080" viewBox="0 0 1920 1080"><circle cx="22.5" cy="894.4" r="5" fill="#595959"/><path d="M19.5 894.4 H25.5" stroke="#fff" stroke-width="1.6"/><path d="M22.5 891.4 V897.4" stroke="#fff" stroke-width="1.6"/></svg>
<div class="t" style="left:39.4px;top:888.74px;font-size:12px;line-height:12px;font-weight:700;color:#4d4d4d;font-family:'Liberation Sans', sans-serif;">Entreprise 9</div>
<div class="r" style="left:575.5px;top:894.5px;width:4.2px;height:2px;background:#444;"></div>
<div class="r" style="left:742.5px;top:894.5px;width:4.2px;height:2px;background:#444;"></div>
<div class="r" style="left:909.5px;top:894.5px;width:4.2px;height:2px;background:#444;"></div>
<div class="r" style="left:1077.5px;top:894.5px;width:4.2px;height:2px;background:#444;"></div>
<div class="r" style="left:1244.5px;top:894.5px;width:4.2px;height:2px;background:#444;"></div>
<div class="r" style="left:1411.5px;top:894.5px;width:4.2px;height:2px;background:#444;"></div>
<div class="r" style="left:1579.5px;top:894.5px;width:4.2px;height:2px;background:#444;"></div>
<div class="r" style="left:1746.5px;top:894.5px;width:4.2px;height:2px;background:#444;"></div>
<div class="r" style="left:572px;top:907px;width:166px;height:22px;background:#f1f1f1;"></div>
<div class="r" style="left:739px;top:907px;width:166px;height:22px;background:#f1f1f1;"></div>
<div class="r" style="left:906px;top:907px;width:167px;height:22px;background:#f1f1f1;"></div>
<div class="r" style="left:1074px;top:907px;width:166px;height:22px;background:#f1f1f1;"></div>
<div class="r" style="left:1241px;top:907px;width:166px;height:22px;background:#f1f1f1;"></div>
<div class="r" style="left:1408px;top:907px;width:167px;height:22px;background:#f1f1f1;"></div>
<div class="r" style="left:1576px;top:907px;width:166px;height:22px;background:#f1f1f1;"></div>
<div class="r" style="left:1743px;top:907px;width:164px;height:22px;background:#f1f1f1;"></div>
<div class="r" style="left:10px;top:906px;width:1900px;height:1px;background:#e6e6e6;"></div>
<svg style="left:0;top:0" width="1920" height="1080" viewBox="0 0 1920 1080"><circle cx="22.5" cy="916.4" r="5" fill="#595959"/><path d="M19.5 916.4 H25.5" stroke="#fff" stroke-width="1.6"/><path d="M22.5 913.4 V919.4" stroke="#fff" stroke-width="1.6"/></svg>
<div class="t" style="left:39.4px;top:910.74px;font-size:12px;line-height:12px;font-weight:700;color:#4d4d4d;font-family:'Liberation Sans', sans-serif;">Entreprise 11</div>
<div class="r" style="left:575.5px;top:916.5px;width:4.2px;height:2px;background:#444;"></div>
<div class="r" style="left:742.5px;top:916.5px;width:4.2px;height:2px;background:#444;"></div>
<div class="r" style="left:909.5px;top:916.5px;width:4.2px;height:2px;background:#444;"></div>
<div class="r" style="left:1077.5px;top:916.5px;width:4.2px;height:2px;background:#444;"></div>
<div class="r" style="left:1244.5px;top:916.5px;width:4.2px;height:2px;background:#444;"></div>
<div class="r" style="left:1411.5px;top:916.5px;width:4.2px;height:2px;background:#444;"></div>
<div class="r" style="left:1579.5px;top:916.5px;width:4.2px;height:2px;background:#444;"></div>
<div class="r" style="left:1746.5px;top:916.5px;width:4.2px;height:2px;background:#444;"></div>
<div class="r" style="left:10px;top:929px;width:1900px;height:1px;background:#e6e6e6;"></div>
<svg style="left:0;top:0" width="1920" height="1080" viewBox="0 0 1920 1080"><circle cx="22.5" cy="939.4" r="5" fill="#595959"/><path d="M19.5 939.4 H25.5" stroke="#fff" stroke-width="1.6"/><path d="M22.5 936.4 V942.4" stroke="#fff" stroke-width="1.6"/></svg>
<div class="t" style="left:39.4px;top:933.74px;font-size:12px;line-height:12px;font-weight:700;color:#4d4d4d;font-family:'Liberation Sans', sans-serif;">Entreprise 14</div>
<div class="t" style="right:1190.5px;top:933.74px;font-size:12px;line-height:12px;font-weight:700;color:#4d4d4d;font-family:'Liberation Sans', sans-serif;letter-spacing:0.7px;">9 824,04 €</div>
<div class="t" style="right:1023.5px;top:933.74px;font-size:12px;line-height:12px;font-weight:700;color:#4d4d4d;font-family:'Liberation Sans', sans-serif;letter-spacing:0.7px;">0,13 €</div>
<div class="t" style="right:855.5px;top:933.74px;font-size:12px;line-height:12px;font-weight:700;color:#4d4d4d;font-family:'Liberation Sans', sans-serif;letter-spacing:0.7px;">20 625 412,42 €</div>
<div class="t" style="right:688.5px;top:933.74px;font-size:12px;line-height:12px;font-weight:700;color:#4d4d4d;font-family:'Liberation Sans', sans-serif;letter-spacing:0.7px;">2 082 349,93 €</div>
<div class="t" style="right:521.5px;top:933.74px;font-size:12px;line-height:12px;font-weight:700;color:#4d4d4d;font-family:'Liberation Sans', sans-serif;letter-spacing:0.7px;">1 676 147,65 €</div>
<div class="t" style="right:353.5px;top:933.74px;font-size:12px;line-height:12px;font-weight:700;color:#4d4d4d;font-family:'Liberation Sans', sans-serif;letter-spacing:0.7px;">2 352 627,96 €</div>
<div class="t" style="right:186.5px;top:933.74px;font-size:12px;line-height:12px;font-weight:700;color:#4d4d4d;font-family:'Liberation Sans', sans-serif;letter-spacing:0.7px;">1 624 850,25 €</div>
<div class="t" style="right:19.5px;top:933.74px;font-size:12px;line-height:12px;font-weight:700;color:#4d4d4d;font-family:'Liberation Sans', sans-serif;letter-spacing:0.7px;">1 783 664,71 €</div>
<div class="r" style="left:572px;top:952px;width:166px;height:21px;background:#f1f1f1;"></div>
<div class="r" style="left:10px;top:951px;width:1900px;height:1px;background:#e6e6e6;"></div>
<svg style="left:0;top:0" width="1920" height="1080" viewBox="0 0 1920 1080"><circle cx="22.5" cy="961.4" r="5" fill="#595959"/><path d="M19.5 961.4 H25.5" stroke="#fff" stroke-width="1.6"/><path d="M22.5 958.4 V964.4" stroke="#fff" stroke-width="1.6"/></svg>
<div class="t" style="left:39.4px;top:955.74px;font-size:12px;line-height:12px;font-weight:700;color:#4d4d4d;font-family:'Liberation Sans', sans-serif;">Entreprise 17</div>
<div class="r" style="left:575.5px;top:961.5px;width:4.2px;height:2px;background:#444;"></div>
<div class="t" style="right:1023.5px;top:955.74px;font-size:12px;line-height:12px;font-weight:700;color:#4d4d4d;font-family:'Liberation Sans', sans-serif;letter-spacing:0.7px;">3 052 771,58 €</div>
<div class="t" style="right:855.5px;top:955.74px;font-size:12px;line-height:12px;font-weight:700;color:#4d4d4d;font-family:'Liberation Sans', sans-serif;letter-spacing:0.7px;">5 008 784,27 €</div>
<div class="t" style="right:688.5px;top:955.74px;font-size:12px;line-height:12px;font-weight:700;color:#4d4d4d;font-family:'Liberation Sans', sans-serif;letter-spacing:0.7px;">399 825,56 €</div>
<div class="t" style="right:521.5px;top:955.74px;font-size:12px;line-height:12px;font-weight:700;color:#4d4d4d;font-family:'Liberation Sans', sans-serif;letter-spacing:0.7px;">415 149,76 €</div>
<div class="t" style="right:353.5px;top:955.74px;font-size:12px;line-height:12px;font-weight:700;color:#4d4d4d;font-family:'Liberation Sans', sans-serif;letter-spacing:0.7px;">395 874,14 €</div>
<div class="t" style="right:186.5px;top:955.74px;font-size:12px;line-height:12px;font-weight:700;color:#4d4d4d;font-family:'Liberation Sans', sans-serif;letter-spacing:0.7px;">424 517,06 €</div>
<div class="t" style="right:19.5px;top:955.74px;font-size:12px;line-height:12px;font-weight:700;color:#4d4d4d;font-family:'Liberation Sans', sans-serif;letter-spacing:0.7px;">375 315,45 €</div>
<div class="r" style="left:572px;top:974px;width:166px;height:21px;background:#f1f1f1;"></div>
<div class="r" style="left:10px;top:973px;width:1900px;height:1px;background:#e6e6e6;"></div>
<svg style="left:0;top:0" width="1920" height="1080" viewBox="0 0 1920 1080"><circle cx="22.5" cy="983.4" r="5" fill="#595959"/><path d="M19.5 983.4 H25.5" stroke="#fff" stroke-width="1.6"/><path d="M22.5 980.4 V986.4" stroke="#fff" stroke-width="1.6"/></svg>
<div class="t" style="left:39.4px;top:977.74px;font-size:12px;line-height:12px;font-weight:700;color:#4d4d4d;font-family:'Liberation Sans', sans-serif;">Entreprise 19</div>
<div class="r" style="left:575.5px;top:983.5px;width:4.2px;height:2px;background:#444;"></div>
<div class="t" style="right:1023.5px;top:977.74px;font-size:12px;line-height:12px;font-weight:700;color:#4d4d4d;font-family:'Liberation Sans', sans-serif;letter-spacing:0.7px;">17 019 829,83 €</div>
<div class="t" style="right:855.5px;top:977.74px;font-size:12px;line-height:12px;font-weight:700;color:#4d4d4d;font-family:'Liberation Sans', sans-serif;letter-spacing:0.7px;">14 884 112,80 €</div>
<div class="t" style="right:688.5px;top:977.74px;font-size:12px;line-height:12px;font-weight:700;color:#4d4d4d;font-family:'Liberation Sans', sans-serif;letter-spacing:0.7px;">1 459 535,06 €</div>
<div class="t" style="right:521.5px;top:977.74px;font-size:12px;line-height:12px;font-weight:700;color:#4d4d4d;font-family:'Liberation Sans', sans-serif;letter-spacing:0.7px;">1 532 649,93 €</div>
<div class="t" style="right:353.5px;top:977.74px;font-size:12px;line-height:12px;font-weight:700;color:#4d4d4d;font-family:'Liberation Sans', sans-serif;letter-spacing:0.7px;">1 368 333,26 €</div>
<div class="t" style="right:186.5px;top:977.74px;font-size:12px;line-height:12px;font-weight:700;color:#4d4d4d;font-family:'Liberation Sans', sans-serif;letter-spacing:0.7px;">1 207 235,43 €</div>
<div class="t" style="right:19.5px;top:977.74px;font-size:12px;line-height:12px;font-weight:700;color:#4d4d4d;font-family:'Liberation Sans', sans-serif;letter-spacing:0.7px;">1 079 090,41 €</div>
<div class="r" style="left:572px;top:996px;width:166px;height:21px;background:#f1f1f1;"></div>
<div class="r" style="left:10px;top:995px;width:1900px;height:1px;background:#e6e6e6;"></div>
<svg style="left:0;top:0" width="1920" height="1080" viewBox="0 0 1920 1080"><circle cx="22.5" cy="1005.4" r="5" fill="#595959"/><path d="M19.5 1005.4 H25.5" stroke="#fff" stroke-width="1.6"/><path d="M22.5 1002.4 V1008.4" stroke="#fff" stroke-width="1.6"/></svg>
<div class="t" style="left:39.4px;top:999.74px;font-size:12px;line-height:12px;font-weight:700;color:#4d4d4d;font-family:'Liberation Sans', sans-serif;">Entreprise 20</div>
<div class="r" style="left:575.5px;top:1005.5px;width:4.2px;height:2px;background:#444;"></div>
<div class="t" style="right:1023.5px;top:999.74px;font-size:12px;line-height:12px;font-weight:700;color:#4d4d4d;font-family:'Liberation Sans', sans-serif;letter-spacing:0.7px;">5 929 563,35 €</div>
<div class="t" style="right:855.5px;top:999.74px;font-size:12px;line-height:12px;font-weight:700;color:#4d4d4d;font-family:'Liberation Sans', sans-serif;letter-spacing:0.7px;">5 341 578,03 €</div>
<div class="t" style="right:688.5px;top:999.74px;font-size:12px;line-height:12px;font-weight:700;color:#4d4d4d;font-family:'Liberation Sans', sans-serif;letter-spacing:0.7px;">446 948,30 €</div>
<div class="t" style="right:521.5px;top:999.74px;font-size:12px;line-height:12px;font-weight:700;color:#4d4d4d;font-family:'Liberation Sans', sans-serif;letter-spacing:0.7px;">555 500,14 €</div>
<div class="t" style="right:353.5px;top:999.74px;font-size:12px;line-height:12px;font-weight:700;color:#4d4d4d;font-family:'Liberation Sans', sans-serif;letter-spacing:0.7px;">405 819,23 €</div>
<div class="t" style="right:186.5px;top:999.74px;font-size:12px;line-height:12px;font-weight:700;color:#4d4d4d;font-family:'Liberation Sans', sans-serif;letter-spacing:0.7px;">388 782,52 €</div>
<div class="t" style="right:19.5px;top:999.74px;font-size:12px;line-height:12px;font-weight:700;color:#4d4d4d;font-family:'Liberation Sans', sans-serif;letter-spacing:0.7px;">410 599,83 €</div>
<div class="r" style="left:10px;top:1017px;width:1900px;height:1px;background:#e6e6e6;"></div>
<svg style="left:0;top:0" width="1920" height="1080" viewBox="0 0 1920 1080"><circle cx="22.5" cy="1027.4" r="5" fill="#595959"/><path d="M19.5 1027.4 H25.5" stroke="#fff" stroke-width="1.6"/><path d="M22.5 1024.4 V1030.4" stroke="#fff" stroke-width="1.6"/></svg>
<div class="t" style="left:39.4px;top:1021.74px;font-size:12px;line-height:12px;font-weight:700;color:#4d4d4d;font-family:'Liberation Sans', sans-serif;">Entreprise 23</div>
<div class="t" style="right:1190.5px;top:1021.74px;font-size:12px;line-height:12px;font-weight:700;color:#4d4d4d;font-family:'Liberation Sans', sans-serif;letter-spacing:0.7px;">6 825 391,53 €</div>
<div class="t" style="right:1023.5px;top:1021.74px;font-size:12px;line-height:12px;font-weight:700;color:#4d4d4d;font-family:'Liberation Sans', sans-serif;letter-spacing:0.7px;">6 942 922,37 €</div>
<div class="t" style="right:855.5px;top:1021.74px;font-size:12px;line-height:12px;font-weight:700;color:#4d4d4d;font-family:'Liberation Sans', sans-serif;letter-spacing:0.7px;">6 592 093,86 €</div>
<div class="t" style="right:688.5px;top:1021.74px;font-size:12px;line-height:12px;font-weight:700;color:#4d4d4d;font-family:'Liberation Sans', sans-serif;letter-spacing:0.7px;">512 919,08 €</div>
<div class="t" style="right:521.5px;top:1021.74px;font-size:12px;line-height:12px;font-weight:700;color:#4d4d4d;font-family:'Liberation Sans', sans-serif;letter-spacing:0.7px;">459 996,02 €</div>
<div class="t" style="right:353.5px;top:1021.74px;font-size:12px;line-height:12px;font-weight:700;color:#4d4d4d;font-family:'Liberation Sans', sans-serif;letter-spacing:0.7px;">435 612,89 €</div>
<div class="t" style="right:186.5px;top:1021.74px;font-size:12px;line-height:12px;font-weight:700;color:#4d4d4d;font-family:'Liberation Sans', sans-serif;letter-spacing:0.7px;">481 315,07 €</div>
<div class="t" style="right:19.5px;top:1021.74px;font-size:12px;line-height:12px;font-weight:700;color:#4d4d4d;font-family:'Liberation Sans', sans-serif;letter-spacing:0.7px;">457 455,72 €</div>
<div class="r" style="left:738px;top:819px;width:1px;height:212px;background:#e6e6e6;"></div>
<div class="r" style="left:905px;top:819px;width:1px;height:212px;background:#e6e6e6;"></div>
<div class="r" style="left:1073px;top:819px;width:1px;height:212px;background:#e6e6e6;"></div>
<div class="r" style="left:1240px;top:819px;width:1px;height:212px;background:#e6e6e6;"></div>
<div class="r" style="left:1407px;top:819px;width:1px;height:212px;background:#e6e6e6;"></div>
<div class="r" style="left:1575px;top:819px;width:1px;height:212px;background:#e6e6e6;"></div>
<div class="r" style="left:1742px;top:819px;width:1px;height:212px;background:#e6e6e6;"></div>
</div>
</body></html>
